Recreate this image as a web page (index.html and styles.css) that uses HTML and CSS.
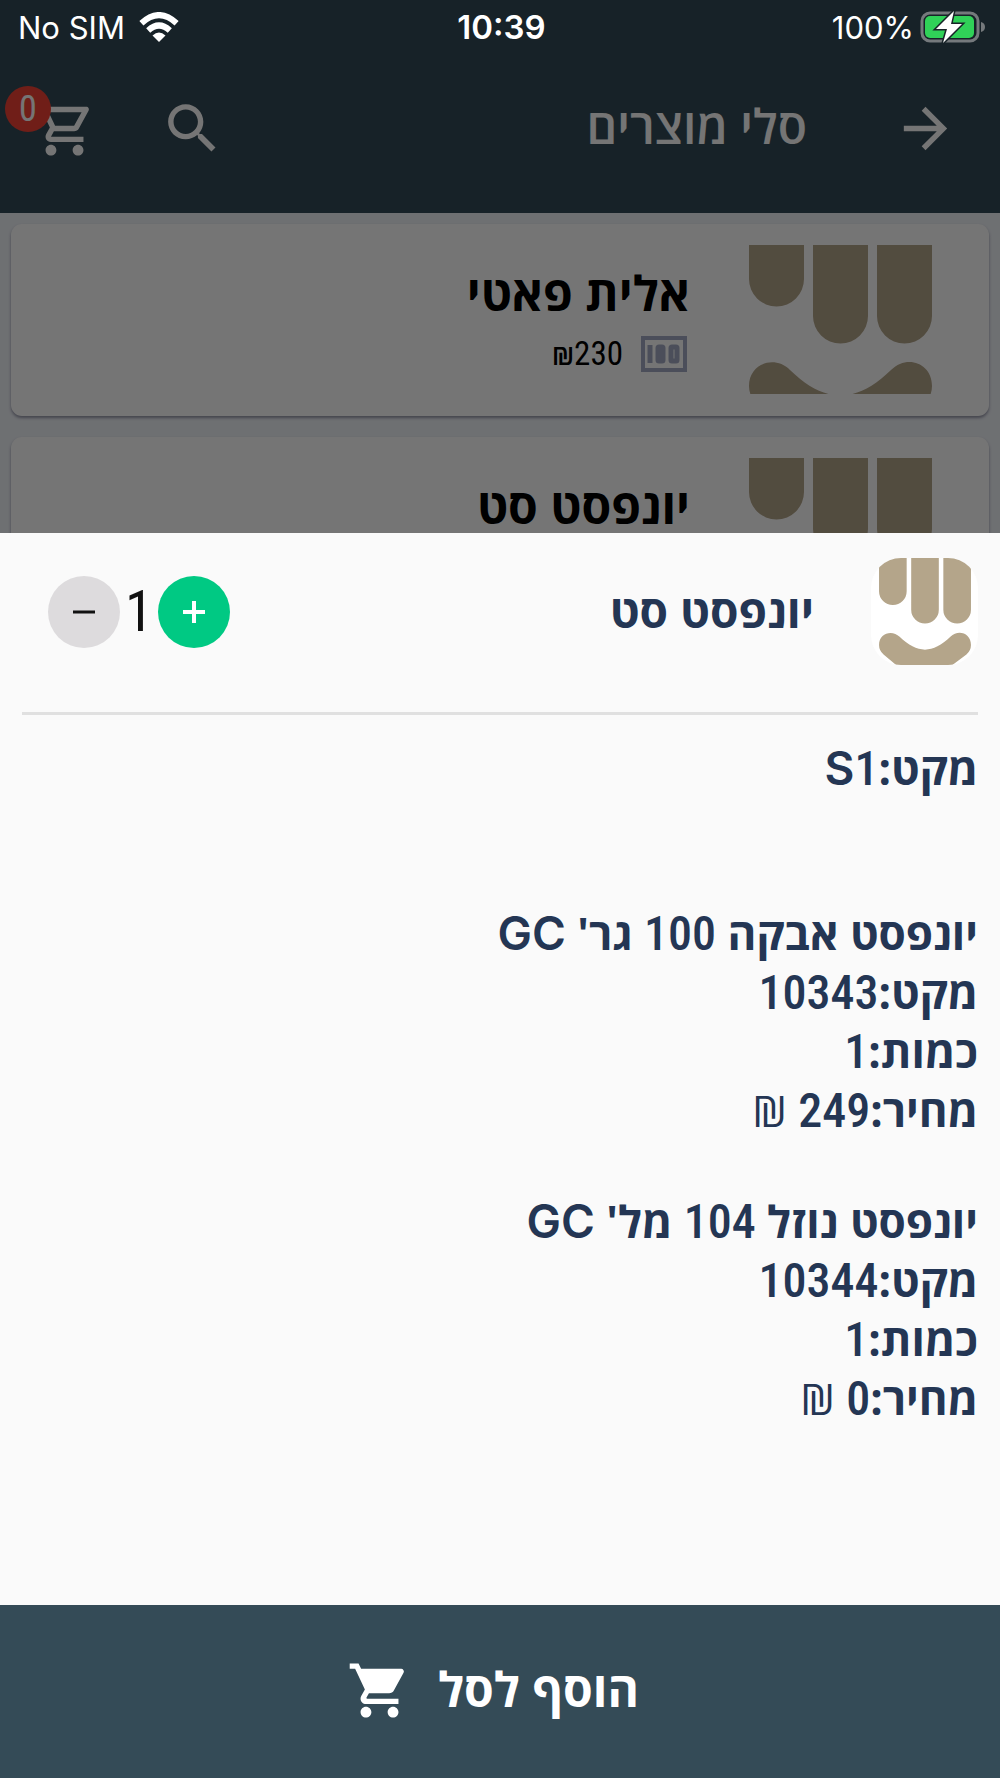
FILE: index.html
```html
<!DOCTYPE html>
<html lang="he" dir="rtl">
<head>
<meta charset="utf-8">
<meta name="viewport" content="width=device-width, initial-scale=1">
<title>סלי מוצרים</title>
<link rel="stylesheet" href="styles.css">
</head>
<body>
<svg class="defs" aria-hidden="true">
  <symbol id="brand" viewBox="0 0 213 213">
    <path d="M16 0H71V66A27.5 27.5 0 0 1 16 66ZM80 0H135V103A27.500 27.500 0 0 1 80 103ZM144 0H199V103A27.500 27.500 0 0 1 144 103Z"/>
    <path d="M16 173C16 150 42 142 57 157C92 191 123 191 158 157C174 141 199 150 199 173Q199 184 190 192L162 213H50L25 192Q16 184 16 173Z"/>
  </symbol>
</svg>
<div class="screen">
  <div class="app">
    <header class="toolbar">
      <button class="icon-button back" aria-label="חזרה"><svg class="icon" viewBox="0 0 24 24"><path d="M12 4l-1.41 1.41L16.17 11H4v2h12.17l-5.58 5.59L12 20l8-8z"/></svg></button>
      <h1 class="toolbar-title">סלי מוצרים</h1>
      <button class="icon-button search" aria-label="חיפוש"><svg class="icon" viewBox="0 0 24 24"><path d="M15.5 14h-.79l-.28-.27C15.41 12.59 16 11.11 16 9.5 16 5.91 13.09 3 9.5 3S3 5.91 3 9.5 5.91 16 9.5 16c1.61 0 3.09-.59 4.23-1.57l.27.28v.79l5 4.99L20.49 19l-4.99-5zm-6 0C7.01 14 5 11.99 5 9.5S7.01 5 9.5 5 14 7.01 14 9.5 11.99 14 9.5 14z"/></svg></button>
      <button class="icon-button cart" aria-label="סל קניות"><svg class="icon" viewBox="0 0 24 24"><path d="M15.55 13c.75 0 1.41-.41 1.75-1.03l3.58-6.49c.37-.66-.11-1.48-.87-1.48H5.21l-.94-2H1v2h2l3.6 7.59-1.35 2.44C4.52 15.37 5.48 17 7 17h12v-2H7l1.1-2h7.45zM6.16 6h12.15l-2.76 5H8.53L6.16 6zM7 18c-1.1 0-1.99.9-1.99 2S5.9 22 7 22s2-.9 2-2-.9-2-2-2zm10 0c-1.1 0-1.99.9-1.99 2s.89 2 1.99 2 2-.9 2-2-.9-2-2-2z"/></svg><span class="badge">0</span></button>
    </header>
    <main class="list">
      <article class="card">
        <svg class="card-logo" viewBox="0 32 213 149" aria-hidden="true"><use href="#brand" width="213" height="213"/></svg>
        <div class="card-body">
          <h2 class="card-title">אלית פאטי</h2>
          <p class="card-price">
            <svg class="cash" viewBox="0 0 46 36" aria-hidden="true"><path class="frame" d="M2 2H44V34H2Z"/><path class="digits" d="M9 9V27M17 12Q17 11 18 11H21Q22 11 22 12V24Q22 25 21 25H18Q17 25 17 24ZM30 12Q30 11 31 11H35Q36 11 36 12V24Q36 25 35 25H31Q30 25 30 24Z"/></svg>
            <span class="amount">₪230</span>
          </p>
        </div>
      </article>
      <article class="card">
        <svg class="card-logo" viewBox="0 32 213 149" aria-hidden="true"><use href="#brand" width="213" height="213"/></svg>
        <div class="card-body">
          <h2 class="card-title">יונפסט סט</h2>
        </div>
      </article>
    </main>
  </div>
  <div class="scrim"></div>
  <div class="status" dir="ltr">
    <div class="status-start"><span>No SIM</span>
      <svg class="wifi" viewBox="0 0 40 30" aria-hidden="true"><path d="M20 30L13.500 23.500Q20 17.500 26.500 23.500Z"/><path class="arc" d="M9.200 18.500Q20 8.500 30.800 18.500M2.400 11.200Q20 -5 37.600 11.200"/></svg>
    </div>
    <span class="time">10:39</span>
    <div class="status-end"><span>100%</span>
      <svg class="battery" viewBox="0 0 65 32" aria-hidden="true"><rect class="shell" x="2" y="2" width="56" height="28" rx="8"/><path class="nub" d="M61 11Q65 12 65 16T61 21Z"/><rect class="charge" x="5" y="5" width="49" height="22" rx="5"/><path class="bolt" d="M34 0L16 18H27L23 32L42 13H31Z"/></svg>
    </div>
  </div>
  <section class="sheet" role="dialog" aria-labelledby="sheet-title">
    <div class="sheet-head">
      <svg class="sheet-logo" viewBox="0 0 213 213" aria-hidden="true"><use href="#brand" width="213" height="213"/></svg>
      <h2 class="sheet-title" id="sheet-title">יונפסט סט</h2>
      <div class="stepper">
        <button class="round plus" aria-label="הוסף יחידה"><svg viewBox="0 0 24 24"><path d="M12 1V23M1 12H23"/></svg></button>
        <output class="count">1</output>
        <button class="round minus" aria-label="הסר יחידה"><svg viewBox="0 0 24 24"><path d="M1 12H23"/></svg></button>
      </div>
    </div>
    <div class="details">
      <div class="group first"><p>מקט:<span class="latin">S</span><span class="num">1</span></p></div>
      <div class="group">
        <p>יונפסט אבקה <span class="num">100</span> גר' <span class="latin">GC</span></p>
        <p>מקט:<span class="num">10343</span></p>
        <p>כמות:<span class="num">1</span></p>
        <p>מחיר:<span class="num">249</span> <span class="shekel">₪</span></p>
      </div>
      <div class="group">
        <p>יונפסט נוזל <span class="num">104</span> מל' <span class="latin">GC</span></p>
        <p>מקט:<span class="num">10344</span></p>
        <p>כמות:<span class="num">1</span></p>
        <p>מחיר:<span class="num">0</span> <span class="shekel">₪</span></p>
      </div>
    </div>
    <button class="add"><span>הוסף לסל</span><svg class="icon" viewBox="0 0 24 24" aria-hidden="true"><path d="M7 18c-1.100 0-1.990.9-1.990 2S5.900 22 7 22s2-.9 2-2-.9-2-2-2zM1 2v2h2l3.600 7.590-1.350 2.450c-.16.280-.25.610-.25.960 0 1.100.9 2 2 2h12v-2H7.420c-.14 0-.25-.11-.25-.25l.03-.12.900-1.630h7.450c.75 0 1.410-.41 1.750-1.030l3.580-6.490A1 1 0 0 0 20 4H5.210l-.94-2H1zm16 16c-1.100 0-1.990.9-1.990 2s.89 2 1.990 2 2-.9 2-2-.9-2-2-2z"/></svg></button>
  </section>
</div>
</body>
</html>
```
FILE: styles.css
```css
* { box-sizing: border-box; }
body { margin: 0; font-family: "Open Sans", "Liberation Sans", sans-serif; }
h1, h2, p { margin: 0; }
button { border: 0; padding: 0; background: none; font: inherit; color: inherit; }
.defs { position: absolute; width: 0; height: 0; }
.num { font-family: "Roboto Condensed", "Open Sans", sans-serif; font-size: 48px; line-height: 1; font-weight: 500; }
.latin { font-family: Inter, "Liberation Sans", sans-serif; font-size: 46px; line-height: 1; font-weight: 600; }
.icon { display: block; width: 65px; height: 65px; fill: currentColor; }

.screen { display: grid; grid-template-columns: minmax(0, 1fr); min-height: 100vh; }
.app, .scrim, .status, .sheet { grid-area: 1 / 1; }
.app { z-index: 0; background: #f0f3f9; }
.scrim { z-index: 1; background: rgba(0, 0, 0, 0.54); }
.status, .sheet { z-index: 2; }

.toolbar { display: flex; align-items: center; height: 213px; padding: 43px 42px 0 32px; background: #344b57; color: #fff; }
.toolbar-title { flex: 1; padding: 0 86px 4px 0; font-size: 48px; line-height: 60px; font-weight: 600; }
.cart { position: relative; margin-right: 63px; }
.badge { position: absolute; left: -27px; top: -10px; width: 46px; height: 46px; border-radius: 50%; background: #f44336; font-family: "Roboto Condensed", "Open Sans", sans-serif; font-size: 36px; line-height: 46px; }

.list { display: flex; flex-direction: column; gap: 21px; padding: 11px; }
.card { display: flex; height: 192px; padding: 21px 43px; border-radius: 11px; background: #fff; box-shadow: 0 2px 3px rgba(60, 60, 90, 0.5); }
.card-logo { width: 213px; height: 149px; fill: #b4a58a; }
.card-body { padding: 16px 43px 0 0; }
.card-title { font-size: 48px; line-height: 64px; font-weight: 700; }
.card-price { display: flex; align-items: center; gap: 18px; padding: 9px 3px 0 0; font-family: "Roboto Condensed", "Open Sans", sans-serif; font-size: 33px; line-height: 40px; }
.cash { width: 46px; height: 36px; fill: none; stroke: #a3abc4; }
.frame { stroke-width: 4; }
.digits { stroke-width: 5; }

.status { display: grid; grid-template-columns: 1fr auto 1fr; align-items: center; align-self: start; height: 54px; padding: 0 15px 0 18px; color: #fff; font-family: Inter, sans-serif; font-size: 31px; }
.status-start, .status-end { display: flex; align-items: center; gap: 14px; }
.status-end { justify-content: flex-end; gap: 6px; }
.time { font-size: 33px; font-weight: 600; }
.wifi { width: 40px; height: 30px; fill: #fff; }
.arc { fill: none; stroke: #fff; stroke-width: 6; }
.battery { width: 65px; height: 32px; }
.shell { fill: none; stroke: #75797c; stroke-width: 3; }
.nub { fill: #75797c; }
.charge { fill: #30d158; }
.bolt { fill: #fff; stroke: #182328; stroke-width: 3; paint-order: stroke; }

.sheet { display: flex; flex-direction: column; align-self: end; min-height: 70vh; background: #fafafa; color: #243654; }
.sheet-head { display: flex; align-items: flex-start; margin: 0 22px; padding: 25px 0 47px; border-bottom: 3px solid #e0e0e0; }
.sheet-logo { width: 107px; height: 107px; border-radius: 30px; background: #fff; fill: #b4a58a; }
.sheet-title { flex: 1; padding: 22px 57px 0 0; font-size: 46px; line-height: 60px; font-weight: 700; }
.stepper { display: flex; align-items: center; padding: 18px 0 0 26px; }
.round { display: grid; place-items: center; width: 72px; height: 72px; border-radius: 50%; }
.round svg { width: 24px; height: 24px; fill: none; stroke: currentColor; stroke-width: 4; }
.plus { background: #00c983; color: #fff; }
.minus { background: #dddbdd; color: #111; }
.minus svg { stroke-width: 3; }
.count { width: 38px; text-align: center; font-family: "Roboto Condensed", "Open Sans", sans-serif; font-size: 57px; line-height: 72px; color: #111; }

.details { flex: 1; padding: 24px 22px; font-size: 44px; line-height: 59px; font-weight: 700; }
.shekel { font-weight: 400; }
.group { margin-bottom: 52px; }
.first { margin-bottom: 106px; }
.add { display: flex; align-items: center; justify-content: center; gap: 26px; height: 173px; padding: 0 14px 6px 0; background: #344b57; color: #fff; font-size: 48px; font-weight: 700; }
.add .icon { margin-top: 4px; }
```
